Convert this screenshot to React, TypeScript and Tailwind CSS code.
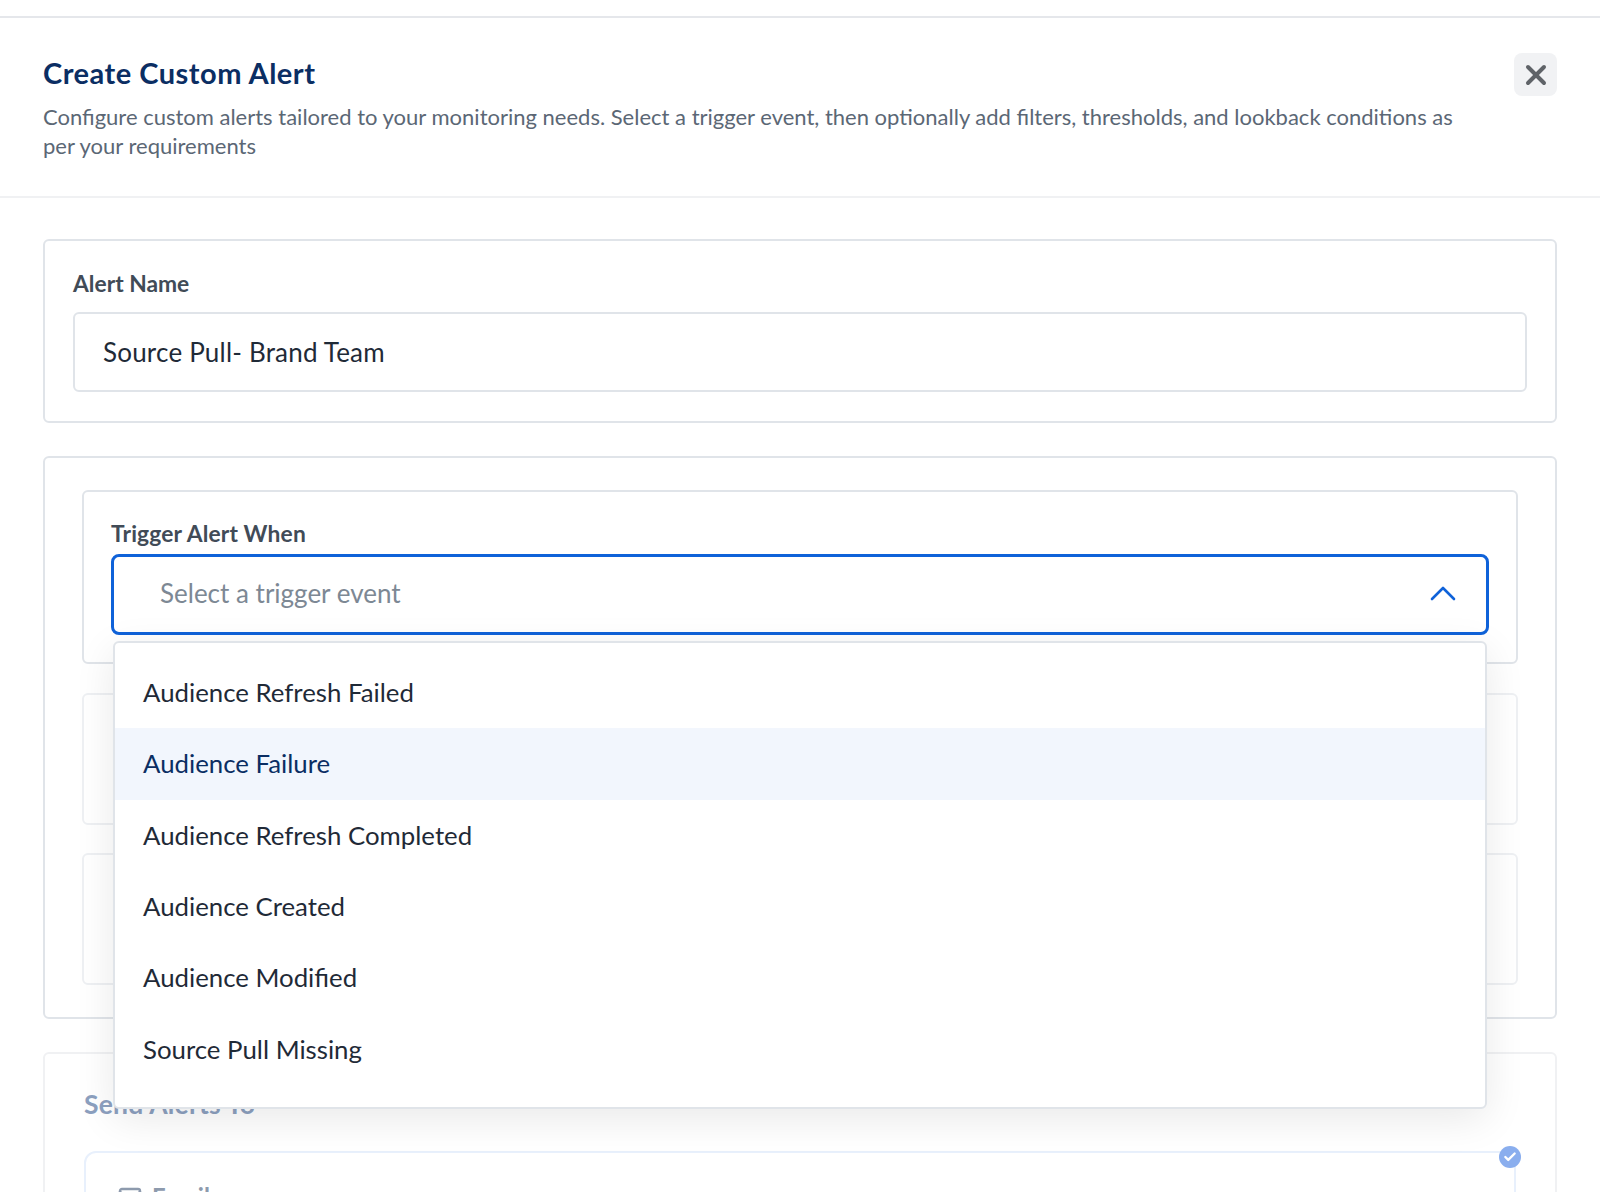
import { X, Check, Mail } from 'lucide-react'

const FONT = 'font-["Lato","Noto_Sans",sans-serif]'

const OPTIONS = [
  'Audience Refresh Failed',
  'Audience Failure',
  'Audience Refresh Completed',
  'Audience Created',
  'Audience Modified',
  'Source Pull Missing',
]

function TriggerDropdown() {
  return (
    <div className="absolute left-[2px] right-[2px] top-[87px] z-20 rounded-md border-2 border-[#e0e4e9] bg-white pt-[14px] pb-[22px] shadow-[0_10px_40px_rgba(0,0,0,0.09)]">
      {OPTIONS.map((o, i) => (
        <div
          key={o}
          className={`flex h-[71.4px] items-center px-[28px] pb-[1px] text-[25.8px] ${
            i === 1 ? 'bg-[#f2f6fd] text-[#0b2e63]' : 'text-[#1f2a37]'
          }`}
        >
          {o}
        </div>
      ))}
    </div>
  )
}

export default function App() {
  return (
    <div className={`h-[1192px] w-[1600px] overflow-hidden bg-white ${FONT}`}>
      <div className="h-[18px] border-b-2 border-[#e5e7eb]" />

      {/* header */}
      <div className="flex h-[180px] items-start justify-between border-b-2 border-[#f0f1f3] pl-[43px] pr-[43px] pt-[35px]">
        <div className="w-[1420px]">
          <h1 className="text-[29px] leading-[40px] font-bold tracking-[0.5px] text-[#0b2e63]">Create Custom Alert</h1>
          <p className="mt-[9px] text-[22px] leading-[29px] text-[#5b6775]">
            Configure custom alerts tailored to your monitoring needs. Select a trigger event, then optionally add
            filters, thresholds, and lookback conditions as per your requirements
          </p>
        </div>
        <button className="flex h-[43px] w-[43px] items-center justify-center rounded-lg bg-[#f1f2f4] text-[#5f6368]">
          <X size={32} strokeWidth={3} />
        </button>
      </div>

      <div className="px-[43px] pt-[41px]">
        {/* alert name */}
        <div className="h-[184px] rounded-md border-2 border-[#e0e4e9] px-[28px] pt-[27px]">
          <label className="block text-[22.8px] leading-[30px] font-bold text-[#414b57]">Alert Name</label>
          <div className="mt-[14px] flex h-[80px] items-center rounded-md border-2 border-[#e0e4e9] px-[28px] text-[26px] tracking-[0.2px] text-[#1f2a37]">
            Source Pull- Brand Team
          </div>
        </div>

        {/* conditions */}
        <div className="mt-[33px] h-[563px] rounded-md border-2 border-[#e0e4e9] px-[37px] pt-[32px]">
          <div className="h-[174px] rounded-md border-2 border-[#e0e4e9] px-[27px] pt-[26px]">
            <label className="block text-[22.8px] leading-[30px] font-bold tracking-[0.15px] text-[#414b57]">Trigger Alert When</label>
            <div className="relative mt-[6px]">
              <div className="flex h-[81px] items-center justify-between rounded-lg border-[3px] border-[#0f62d9] pl-[46px] pr-[30px] pb-[2px] text-[26px] text-[#7d8894]">
                Select a trigger event
                <svg width="26" height="15" viewBox="0 0 26 15" fill="none" stroke="#0f62d9" strokeWidth="2.6" strokeLinecap="round" strokeLinejoin="round">
                  <path d="M2 13 L13 2 L24 13" />
                </svg>
              </div>
              <TriggerDropdown />
            </div>
          </div>
          <div className="mt-[29px] h-[132px] rounded-md border-2 border-[#eef0f3]" />
          <div className="mt-[28px] h-[132px] rounded-md border-2 border-[#eef0f3]" />
        </div>

        {/* send alerts, faded */}
        <div className="mt-[33px] h-[300px] rounded-md border-2 border-[#f0f1f3] px-[39px] pt-[33px]">
          <h2 className="text-[26.5px] leading-[34px] font-bold tracking-[0.2px] text-[#8ca0bf]">Send Alerts To</h2>
          <div className="relative mt-[30px] h-[200px] rounded-xl border-2 border-[#e8f0fc] px-[32px] pt-[26px]">
            <span className="absolute -top-[7px] right-[-7px] flex h-[22px] w-[22px] items-center justify-center rounded-full bg-[#8aaeee] text-white">
              <Check size={14} strokeWidth={4} />
            </span>
            <div className="flex items-center gap-[10px] text-[24px] font-bold text-[#8d9aad]">
              <Mail size={24} strokeWidth={2.4} />
              Email
            </div>
          </div>
        </div>
      </div>
    </div>
  )
}
